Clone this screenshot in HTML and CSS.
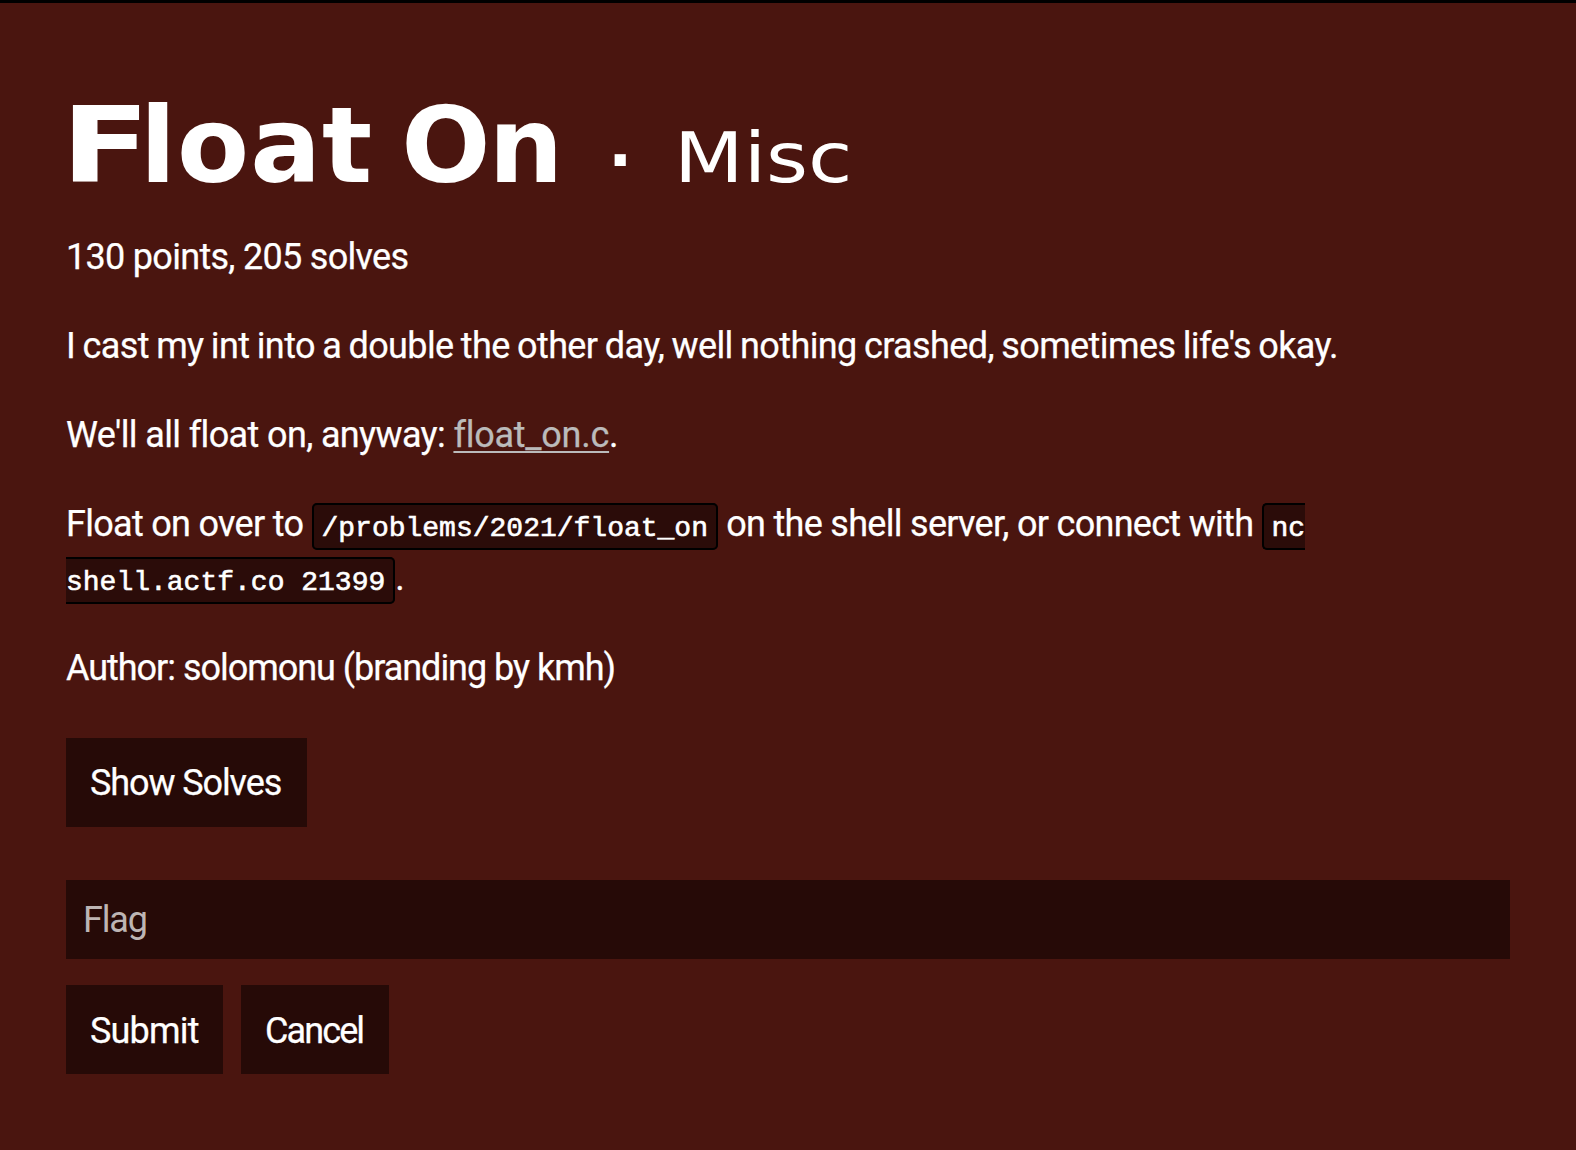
FILE: index.html
```html
<!DOCTYPE html>
<html lang="en">
<head>
<meta charset="utf-8">
<title>Float On</title>
<link rel="stylesheet" href="styles.css">
</head>
<body>
<main class="problem">
  <h1 class="title"><span class="initial">F</span><span class="name">loat</span><span class="name-last">On</span><span class="dot">·</span><span class="category">Misc</span></h1>
  <p class="stats">130 points, 205 solves</p>
  <p class="lead">I cast my int into a double the other day, well nothing crashed, sometimes life's okay.</p>
  <p><span class="anyway">We'll all float on, anyway: </span><a class="link" href="#">float_on.c</a>.</p>
  <p class="connect">Float on over to <code>/problems/2021/float_on</code> on the shell server, or connect with <code>nc shell.actf.co 21399</code>.</p>
  <p class="author">Author: solomonu (branding by kmh)</p>
  <button class="button show" type="button">Show Solves</button>
  <form class="form">
    <input class="flag" type="text" placeholder="Flag" aria-label="Flag">
    <div class="actions">
      <button class="button submit" type="button">Submit</button>
      <button class="button cancel" type="button">Cancel</button>
    </div>
  </form>
</main>
</body>
</html>
```
FILE: styles.css
```css
* { box-sizing: border-box; }
html { background: #4a150f; }
body {
  margin: 0;
  min-height: 1150px;
  border-top: 3px solid #000;
  background: #4a150f;
  color: #fff;
  font: 36px/54px "Roboto", sans-serif;
}
.problem { padding: 77px 66px 66px; }
.title {
  display: flex;
  align-items: baseline;
  height: 150px;
  margin: 0;
  padding-top: 1px;
  font: bold 105px/130px "DejaVu Sans", sans-serif;
  white-space: nowrap;
}
.initial { width: 79px; margin-left: -5px; transform: scaleX(1.24); transform-origin: left; }
.name { letter-spacing: 1px; }
.name-last { margin-left: 28px; letter-spacing: -2px; }
.dot { margin-left: 47px; font-size: 63px; }
.category { margin-left: 42px; font-size: 70px; font-weight: 400; transform: scaleX(1.153); transform-origin: left; }
p { margin: 0 0 35px; }
.stats { letter-spacing: -0.7px; }
.lead { letter-spacing: -0.6px; word-spacing: -1.05px; }
.anyway { letter-spacing: -0.63px; }
.link { color: #bbb; letter-spacing: -0.25px; text-decoration: underline; text-decoration-thickness: 2px; text-underline-offset: 4px; }
.connect { letter-spacing: -0.7px; }
.author { margin-bottom: 0; padding-top: 1px; letter-spacing: -1.03px; }
p, .button { -webkit-text-stroke: 0.25px; }
code {
  padding: 8px 8px 4px;
  border: 2px solid #000;
  border-radius: 5px;
  background: #2b0c09;
  font: 28px/1 "Liberation Mono", monospace;
  letter-spacing: 0;
  -webkit-text-stroke: 0.6px #fff;
}
.button {
  display: block;
  height: 89px;
  padding: 0 0 0 24px;
  border: 0;
  border-radius: 0;
  background: #260a07;
  color: #fff;
  font: inherit;
  letter-spacing: -1.1px;
  text-align: left;
}
.show { width: 241px; margin-top: 43px; }
.form { margin-top: 53px; }
.flag {
  display: block;
  width: 100%;
  height: 79px;
  padding: 0 17px;
  border: 0;
  border-radius: 0;
  background: #260a07;
  color: #fff;
  font: inherit;
  letter-spacing: -1.2px;
}
.flag::placeholder { color: #bdb5b4; opacity: 1; }
.actions { display: flex; gap: 18px; margin-top: 26px; }
.actions .button { padding-top: 2px; }
.submit { width: 157px; letter-spacing: -0.8px; }
.cancel { width: 148px; letter-spacing: -1.9px; }
```
